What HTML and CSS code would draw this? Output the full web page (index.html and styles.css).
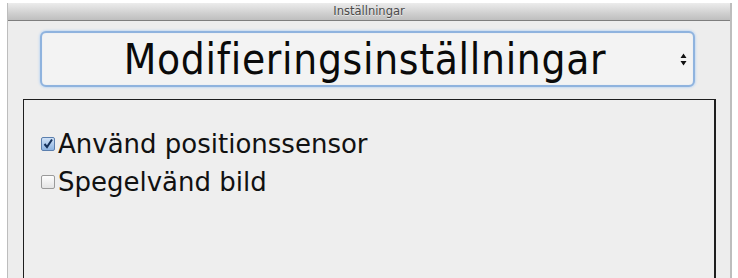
FILE: index.html
```html
<!DOCTYPE html>
<html lang="sv">
<head>
<meta charset="utf-8">
<title>Inställningar</title>
<link rel="stylesheet" href="styles.css">
</head>
<body>
<div class="window">
  <div class="titlebar">Inställningar</div>
  <div class="content">
    <div class="popup">
      <span class="popup-label">Modifieringsinställningar</span>
      <svg class="updown" width="7" height="13" viewBox="0 0 7 13"><path d="M3.5 0.5 L6.5 5 L0.5 5 Z M3.5 12.5 L6.5 8 L0.5 8 Z" fill="#111"/></svg>
    </div>
    <div class="panel">
      <label class="check">
        <span class="box on"><svg width="12" height="12" viewBox="0 0 12 12"><path d="M2.5 6 L5 9 L10 1.5" fill="none" stroke="#14305a" stroke-width="2"/></svg></span>
        <span class="check-label">Använd positionssensor</span>
      </label>
      <label class="check">
        <span class="box"></span>
        <span class="check-label">Spegelvänd bild</span>
      </label>
    </div>
  </div>
</div>
</body>
</html>
```
FILE: styles.css
```css
html, body {
  margin: 0;
  padding: 0;
  background: #ffffff;
  overflow: hidden;
}
.window {
  margin: 3px 0 0 7px;
  width: 722px;
  height: 275px;
  background: #ededed;
  border-left: 1px solid #bdbdbd;
  border-right: 2px solid #bdbdbd;
  display: flex;
  flex-direction: column;
}
.titlebar {
  height: 17px;
  flex: none;
  background: linear-gradient(#ececec, #d0d0d0 60%, #bfbfbf);
  border-bottom: 1px solid #7e7e7e;
  font-family: "DejaVu Sans", sans-serif;
  font-size: 11.5px;
  line-height: 17px;
  color: #4a4a4a;
  text-align: center;
  text-shadow: 0 1px 0 rgba(255,255,255,0.6);
}
.content {
  flex: 1;
  display: flex;
  flex-direction: column;
  padding: 10px 14px 0 15px;
}
.popup {
  margin-left: 17px;
  width: 651px;
  height: 52px;
  border: 2px solid #8fb3de;
  border-radius: 6px;
  box-shadow: 0 0 2px 1px #c7dbf2, inset 0 0 1px #c0d4ee;
  background: #f3f3f3;
  display: flex;
  align-items: center;
  position: relative;
}
.popup-label {
  flex: 1;
  text-align: center;
  font-family: "DejaVu Sans Condensed", "DejaVu Sans", sans-serif;
  font-stretch: condensed;
  font-size: 42px;
  letter-spacing: 0.7px;
  color: #0a0a0a;
  padding-left: 8px;
}
.updown {
  margin-right: 6px;
  flex: none;
}
.panel {
  margin-top: 12px;
  flex: 1;
  border: 1px solid #1e1e1e;
  border-right-width: 2px;
  border-bottom: none;
  background: #eeeeee;
  padding: 31px 0 0 17px;
  display: flex;
  flex-direction: column;
  gap: 12px;
}
.check {
  display: flex;
  align-items: center;
  gap: 3px;
  height: 26px;
}
.box {
  width: 12px;
  height: 12px;
  border: 1px solid #9a9a9a;
  border-radius: 2px;
  background: linear-gradient(#fdfdfd, #e4e4e4);
  display: flex;
  align-items: center;
  justify-content: center;
  flex: none;
}
.box.on {
  border-color: #5b7fae;
  background: linear-gradient(#cfe1f6, #8db4e2);
}
.check-label {
  font-family: "DejaVu Sans", sans-serif;
  font-size: 26px;
  color: #111;
}
```
